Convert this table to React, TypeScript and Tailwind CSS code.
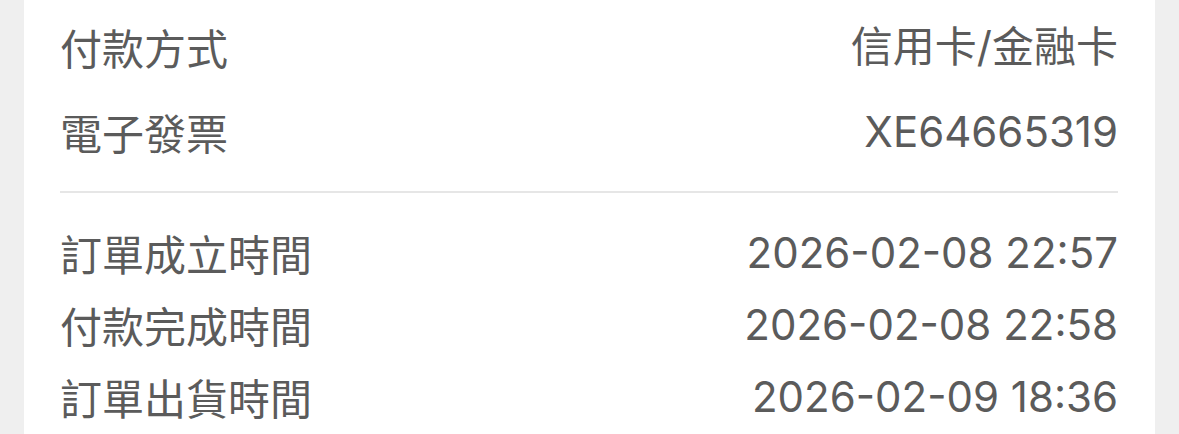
const cjk = "font-['Noto_Sans_CJK_TC','Noto_Sans_CJK_SC',sans-serif]"

type Row = { label: string; value: string }

const top: Row[] = [
  { label: '付款方式', value: '信用卡/金融卡' },
  { label: '電子發票', value: 'XE64665319' },
]

const times: Row[] = [
  { label: '訂單成立時間', value: '2026-02-08 22:57' },
  { label: '付款完成時間', value: '2026-02-08 22:58' },
  { label: '訂單出貨時間', value: '2026-02-09 18:36' },
]

function InfoRow({ row, h }: { row: Row; h: string }) {
  return (
    <div className={`flex items-center justify-between ${h}`}>
      <span className={`${cjk} text-[42px] leading-none text-[#5b5b5b]`}>{row.label}</span>
      <span className="font-['Inter','Noto_Sans_CJK_TC',sans-serif] text-[42px] leading-none text-[#5b5b5b]">
        {row.value}
      </span>
    </div>
  )
}

export default function App() {
  return (
    <div className="h-[434px] w-[1179px] overflow-hidden bg-[#efefef] px-6">
      <div className="h-full bg-white pl-9 pr-[37px] pt-[4px]">
        {top.map((r) => (
          <InfoRow key={r.label} row={r} h="h-[85px]" />
        ))}
        <div className="mt-[17px] h-[2px] bg-[#e6e6e6]" />
        <div className="pt-[24px]">
          {times.map((r) => (
            <InfoRow key={r.label} row={r} h="h-[72px]" />
          ))}
        </div>
      </div>
    </div>
  )
}
